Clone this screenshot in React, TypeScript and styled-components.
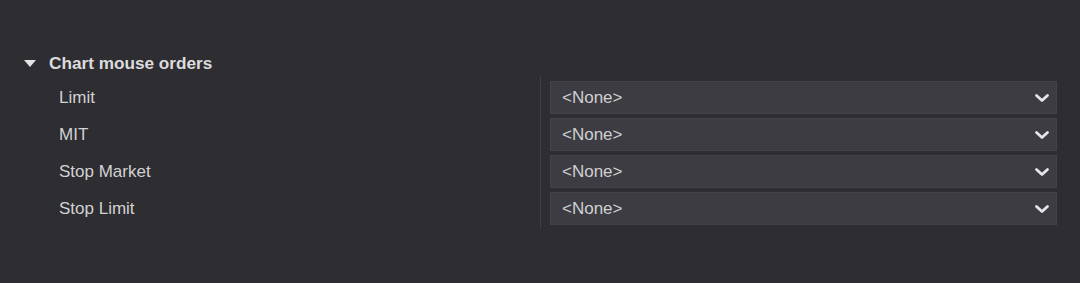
import React from 'react';
import styled, { createGlobalStyle } from 'styled-components';

const GlobalStyle = createGlobalStyle`
  html, body {
    margin: 0;
    padding: 0;
    background-color: #2e2d31;
  }
`;

const Page = styled.div`
  width: 1080px;
  height: 283px;
  box-sizing: border-box;
  padding-top: 51px;
  background-color: #2e2d31;
  font-family: "Liberation Sans", Arial, sans-serif;
  color: #d4d4d6;
`;

const Header = styled.div`
  display: flex;
  align-items: center;
  height: 24px;
  padding-left: 24px;
  gap: 13px;
  font-size: 17.2px;
  font-weight: bold;
  color: #dcdcde;
`;

const Caret = styled.span`
  width: 0;
  height: 0;
  border-left: 6.5px solid transparent;
  border-right: 6.5px solid transparent;
  border-top: 7px solid #e4e4e6;
  margin-top: 1px;
`;

const Grid = styled.div`
  display: grid;
  grid-template-columns: 481px 1px 9px 507px;
  margin-top: 1px;
  margin-left: 59px;
`;

const Labels = styled.div`
  display: flex;
  flex-direction: column;
  padding: 5px 0 4px;
  gap: 4px;
`;

const Label = styled.div`
  height: 33px;
  display: flex;
  align-items: center;
  font-size: 17px;
  color: #d2d2d4;
`;

const Divider = styled.div`
  background-color: #403f45;
`;

const Fields = styled.div`
  grid-column: 4;
  display: flex;
  flex-direction: column;
  padding: 5px 0 4px;
  gap: 4px;
`;

const Select = styled.div`
  height: 33px;
  box-sizing: border-box;
  display: flex;
  align-items: center;
  justify-content: space-between;
  padding: 0 6px 0 11px;
  background-color: #3d3c42;
  border: 1px solid #434248;
  font-size: 17px;
  color: #d0d0d2;
`;

const Chevron = () => (
  <svg width="16" height="10" viewBox="0 0 16 10">
    <path d="M2.5 2.5 L8 7.5 L13.5 2.5" fill="none" stroke="#e6e6e8" strokeWidth="2.8" strokeLinecap="round" strokeLinejoin="round" />
  </svg>
);

const rows = ['Limit', 'MIT', 'Stop Market', 'Stop Limit'];

const App = () => (
  <>
    <GlobalStyle />
    <Page>
      <Header>
        <Caret />
        Chart mouse orders
      </Header>
      <Grid>
        <Labels>
          {rows.map((r) => (
            <Label key={r}>{r}</Label>
          ))}
        </Labels>
        <Divider />
        <Fields>
          {rows.map((r) => (
            <Select key={r}>
              &lt;None&gt;
              <Chevron />
            </Select>
          ))}
        </Fields>
      </Grid>
    </Page>
  </>
);

export default App;
